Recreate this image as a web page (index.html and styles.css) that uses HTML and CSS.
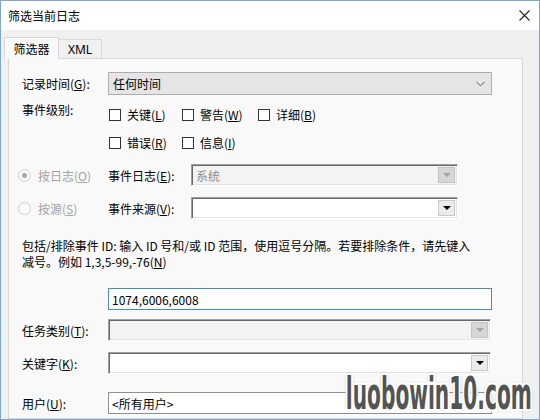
FILE: index.html
```html
<!DOCTYPE html>
<html lang="zh-CN">
<head>
<meta charset="utf-8">
<title>筛选当前日志</title>
<link rel="stylesheet" href="styles.css">
</head>
<body>
<div class="window">
  <div class="titlebar">
    <span class="title">筛选当前日志</span>
    <svg class="close" width="11" height="11" viewBox="0 0 11 11"><path d="M0.5 0.5L10.5 10.5M10.5 0.5L0.5 10.5" stroke="#222" stroke-width="1.1" fill="none"/></svg>
  </div>
  <div class="tabs">
    <div class="tab active">筛选器</div>
    <div class="tab xml">XML</div>
  </div>
  <div class="panel">
    <div class="row row-time">
      <span class="lbl">记录时间(<u>G</u>):</span>
      <div class="combo-flat">
        <span>任何时间</span>
        <svg width="9" height="6" viewBox="0 0 9 6"><path d="M0.5 0.8L4.5 4.8L8.5 0.8" stroke="#555" stroke-width="1" fill="none"/></svg>
      </div>
    </div>
    <div class="row row-level1">
      <span class="lbl lbl-up">事件级别:</span>
      <div class="checks">
        <label class="chk"><span class="box"></span>关键(<u>L</u>)</label>
        <label class="chk"><span class="box"></span>警告(<u>W</u>)</label>
        <label class="chk"><span class="box"></span>详细(<u>B</u>)</label>
      </div>
    </div>
    <div class="row row-level2">
      <span class="lbl"></span>
      <div class="checks">
        <label class="chk"><span class="box"></span>错误(<u>R</u>)</label>
        <label class="chk"><span class="box"></span>信息(<u>I</u>)</label>
      </div>
    </div>
    <div class="row row-log">
      <span class="radio-opt"><span class="radio checked"><span class="dot"></span></span>按日志(<u>O</u>)</span>
      <span class="sublbl">事件日志(<u>E</u>):</span>
      <div class="combo-old disabled w267">
        <span class="val">系统</span>
        <span class="btn"><span class="tri"></span></span>
      </div>
    </div>
    <div class="row row-src">
      <span class="radio-opt"><span class="radio"></span>按源(<u>S</u>)</span>
      <span class="sublbl">事件来源(<u>V</u>):</span>
      <div class="combo-old w267">
        <span class="val"></span>
        <span class="btn"><span class="tri"></span></span>
      </div>
    </div>
    <div class="desc">
      <div class="desc-line">包括/排除事件 ID: 输入 ID 号和/或 ID 范围，使用逗号分隔。若要排除条件，请先键入</div>
      <div class="desc-line">减号。例如 1,3,5-99,-76(<u>N</u>)</div>
    </div>
    <div class="row row-id">
      <span class="lbl"></span>
      <div class="input focus">1074,6006,6008</div>
    </div>
    <div class="row row-task">
      <span class="lbl">任务类别(<u>T</u>):</span>
      <div class="combo-old disabled w383">
        <span class="val"></span>
        <span class="btn"><span class="tri"></span></span>
      </div>
    </div>
    <div class="row row-kw">
      <span class="lbl">关键字(<u>K</u>):</span>
      <div class="combo-old w383">
        <span class="val"></span>
        <span class="btn"><span class="tri"></span></span>
      </div>
    </div>
    <div class="row row-user">
      <span class="lbl">用户(<u>U</u>):</span>
      <div class="input">&lt;所有用户&gt;</div>
    </div>
  </div>
  <div class="watermark">luobowin10.com</div>
</div>
</body>
</html>
```
FILE: styles.css
```css
html, body {
  margin: 0;
  padding: 0;
}
body {
  width: 540px;
  height: 420px;
  overflow: hidden;
  font-family: "Noto Sans CJK SC", "Noto Sans", sans-serif;
  font-size: 12px;
  color: #000;
}
u {
  text-decoration: underline;
  text-underline-offset: 1px;
}
.window {
  box-sizing: border-box;
  width: 540px;
  height: 420px;
  border: 1px solid #7ea6d6;
  background: #f0f0f0;
  position: relative;
  overflow: hidden;
  display: flex;
  flex-direction: column;
}
.titlebar {
  height: 29px;
  flex: none;
  background: #fff;
  display: flex;
  align-items: center;
  justify-content: space-between;
  padding: 0 9px 0 7px;
}
.title {
  font-size: 12px;
  line-height: 14px;
}
.tabs {
  display: flex;
  align-items: flex-end;
  height: 21px;
  margin-top: 7px;
  padding-left: 3px;
  flex: none;
}
.tab {
  box-sizing: border-box;
  height: 19px;
  border: 1px solid #d9d9d9;
  border-bottom: none;
  background: #f0f0f0;
  display: flex;
  align-items: center;
  justify-content: center;
  font-size: 12px;
}
.tab.active {
  width: 55px;
  height: 22px;
  background: #f9f9f9;
  margin-bottom: -1px;
  position: relative;
  z-index: 1;
}
.tab.xml {
  width: 43px;
  border-left: none;
  font-family: "Noto Sans", sans-serif;
}
.panel {
  box-sizing: border-box;
  flex: 1;
  margin-left: 7px;
  width: 515px;
  border: 1px solid #d9d9d9;
  background: #f9f9f9;
  padding: 13px 0 0 13px;
}
.row {
  display: flex;
  align-items: center;
}
.lbl {
  width: 86px;
  flex: none;
  white-space: nowrap;
}
.lbl-up {
  align-self: flex-start;
  margin-top: -5px;
  line-height: 17px;
}
.row-time { height: 23px; }
.row-level1 { height: 17px; margin-top: 11px; }
.row-level2 { height: 17px; margin-top: 11px; }
.row-log { height: 22px; margin-top: 13px; }
.row-src { height: 22px; margin-top: 11px; }
.row-id { height: 22px; margin-top: 18px; }
.row-task { height: 22px; margin-top: 9px; }
.row-kw { height: 22px; margin-top: 11px; }
.row-user { height: 22px; margin-top: 18px; }

.combo-flat {
  box-sizing: border-box;
  width: 384px;
  height: 23px;
  background: #e5e5e5;
  border: 1px solid #adadad;
  display: flex;
  align-items: center;
  justify-content: space-between;
  padding: 0 6px 0 4px;
}
.checks {
  display: flex;
}
.chk {
  display: flex;
  align-items: center;
  width: 73px;
  white-space: nowrap;
}
.chk:nth-child(2) {
  width: 76px;
}
.box {
  box-sizing: border-box;
  width: 12px;
  height: 12px;
  border: 1px solid #333;
  background: #fff;
  margin: 0 6px 0 1px;
}
.radio-opt {
  width: 90px;
  margin-left: -4px;
  flex: none;
  display: flex;
  align-items: center;
  color: #a3a3a3;
  white-space: nowrap;
}
.radio {
  box-sizing: border-box;
  width: 13px;
  height: 13px;
  border-radius: 50%;
  border: 1px solid #cfcfcf;
  background: #fafafa;
  margin-right: 7px;
  display: flex;
  align-items: center;
  justify-content: center;
}
.dot {
  width: 5px;
  height: 5px;
  border-radius: 50%;
  background: #a8a8a8;
}
.sublbl {
  width: 83px;
  flex: none;
  white-space: nowrap;
}
.combo-old {
  box-sizing: border-box;
  height: 22px;
  background: #fff;
  border: 1px solid;
  border-color: #a0a0a0 #ffffff #ffffff #a0a0a0;
  box-shadow: inset 1px 1px 0 #696969, inset -1px -1px 0 #e3e3e3;
  display: flex;
  align-items: center;
  justify-content: space-between;
  padding: 0 2px 0 4px;
}
.combo-old.disabled {
  background: #f3f3f3;
  color: #8d8d8d;
}
.w267 { width: 267px; }
.w383 { width: 383px; }
.btn {
  box-sizing: border-box;
  width: 17px;
  height: 16px;
  background: #ececec;
  border: 1px solid #c9c9c9;
  display: flex;
  align-items: center;
  justify-content: center;
}
.tri {
  width: 0;
  height: 0;
  border-left: 4px solid transparent;
  border-right: 4px solid transparent;
  border-top: 4px solid #000;
}
.disabled .btn {
  background: #d6d6d6;
  border-color: #c4c4c4;
}
.disabled .tri {
  border-top-color: #a4a4a4;
}
.desc {
  margin-top: 19px;
  display: flex;
  flex-direction: column;
}
.desc-line {
  height: 16px;
  line-height: 16px;
  white-space: nowrap;
}
.input {
  box-sizing: border-box;
  width: 384px;
  height: 22px;
  background: #fff;
  border: 1px solid #8f8f8f;
  padding: 0 3px;
  display: flex;
  align-items: center;
}
.input.focus {
  border-color: #4a8bb0;
}
.watermark {
  position: absolute;
  right: 7px;
  bottom: 0;
  font-family: "DejaVu Sans Condensed", "DejaVu Sans", sans-serif;
  font-weight: bold;
  font-size: 44px;
  line-height: normal;
  color: #545454;
  transform: scaleX(0.51);
  transform-origin: right bottom;
  text-shadow: 3px 0 0 #fff, -3px 0 0 #fff, 0 2px 0 #fff, 0 -2px 0 #fff,
    3px 2px 0 #fff, -3px -2px 0 #fff, 3px -2px 0 #fff, -3px 2px 0 #fff,
    0 0 5px #777;
}
```
